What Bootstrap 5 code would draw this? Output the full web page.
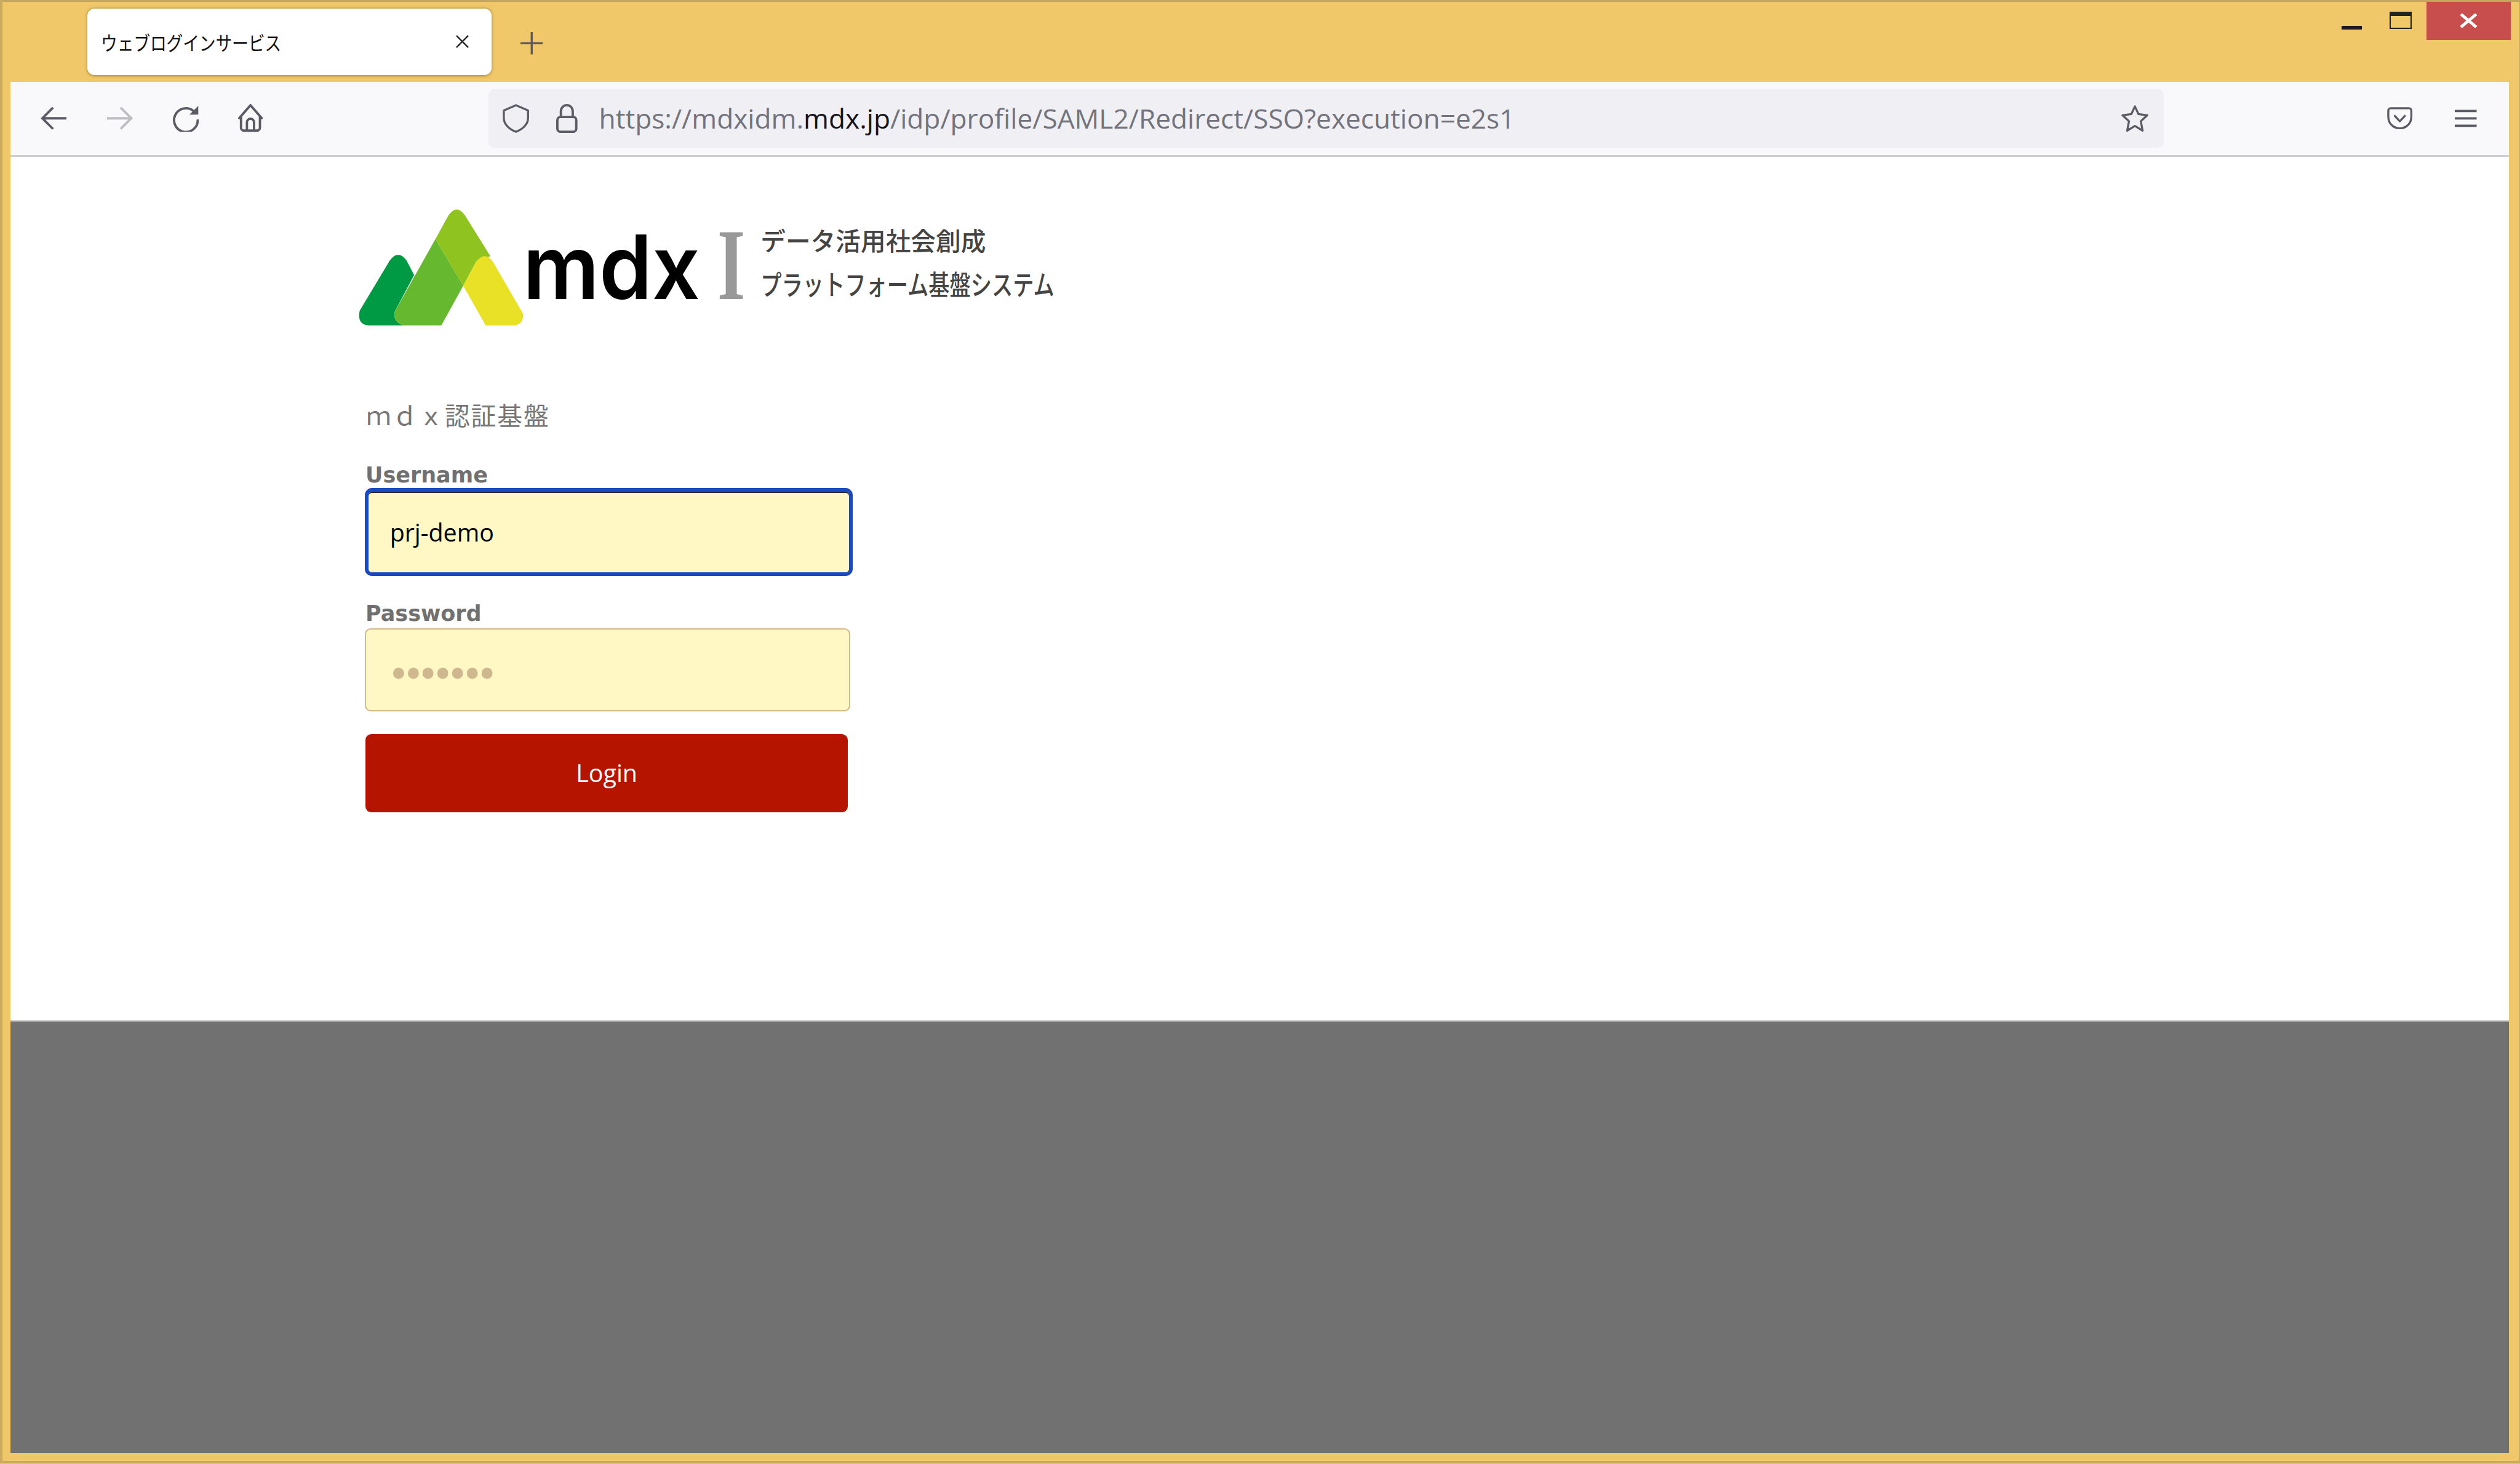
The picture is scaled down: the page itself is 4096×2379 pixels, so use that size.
<!DOCTYPE html>
<html lang="ja">
<head>
<meta charset="utf-8">
<title>ウェブログインサービス</title>
<link href="https://cdn.jsdelivr.net/npm/bootstrap@5.3.0/dist/css/bootstrap.min.css" rel="stylesheet">
<style>
html,body{overflow:hidden;background:#f0c869}
body{zoom:.961;width:4262px;height:2475px;font-family:"Open Sans","Noto Sans CJK JP",sans-serif}
.win-frame{width:4262px;height:2475px;background:#f0c869;border-top:3.2px solid #c4a75e;border-left:4.2px solid #c9aa5e;border-right:2.2px solid #d0ae5f;border-bottom:4.2px solid #c9aa5e;padding:0 16px 14px 14px}
.title-row{height:135px;margin-right:-3px}
.tab-box{width:683px;height:113px;margin:11px 0 0 130px;background:#fff;border-radius:12px;box-shadow:0 1px 6px rgba(90,70,20,.55);padding:0 36px 0 23px}
.tab-label{font:33px "Noto Sans CJK JP",sans-serif;color:#111;transform:scaleX(.845);transform-origin:left center;white-space:nowrap;letter-spacing:-.2px}
.plus-ico{margin:6px 0 0 49px;align-self:center}
.ctl-min{width:35px;height:6.3px;background:#1b1b1b;margin:41px 47px 0 0}
.ctl-max{width:37px;height:29px;border:2.2px solid #222;border-top-width:7.4px;margin:17px 25px 0 0}
.ctl-close{width:143px;height:64px;background:#c84e4e}
.tool-row{height:127px;background:#f9f9fb;border-bottom:3.2px solid #cfcfd3;padding:0 55px 0 50px}
.gap-fwd{margin-left:69px}
.gap-reload{margin-left:67px}
.gap-home{margin-left:66px}
.gap-lock{margin-left:46px}
.gap-menu{margin-left:71px}
.url-box{height:99px;margin:0 378px 0 380px;background:#f0f0f4;border-radius:10px;padding:0 25px 0 24px}
.url-text{font:46px "Open Sans",sans-serif;color:#73737d;margin-left:36px;white-space:nowrap}
.url-text b{font-weight:400;color:#15141a}
.sheet{height:1461px;background:#fff;padding:75px 0 0 599px}
.brand-logo{display:block;margin-left:-17px}
.mdx-word{font:600 150px Inter,sans-serif;fill:#000}
.bar-letter{font:700 172px "Liberation Serif",serif;fill:#999}
.tag-line{font:500 43px "Noto Sans CJK JP",sans-serif;fill:#444}
.tag-tall{font-size:47px}
.site-title{font:42.5px/52px "Noto Sans CJK JP",sans-serif;color:#777;margin:115px 0 0 2px;letter-spacing:1.9px}
.cred-label{display:block;font:700 36.4px/40px "DejaVu Sans",sans-serif;color:#707070;margin:0 0 0 1px}
.form-control.cred-input{height:140px;width:821px;background:#fff7c4;border:2.2px solid #d2b98a;border-radius:10px;padding:0 0 0 42px;font:41px "Open Sans",sans-serif;color:#000;box-shadow:none}
.form-control.cred-input.is-active{width:825px;height:149px;border:6.3px solid #1b49c2;box-shadow:inset 0 2px 0 #2a2a2a;padding:2px 0 0 36px;border-radius:12px}
.form-control.cred-input.is-hidden{color:#cfb78f;font:64px "DejaVu Sans",sans-serif;letter-spacing:-12.8px;padding:15px 0 0 36px}
.user-label{margin-top:57px;margin-bottom:1px}
.pass-label{margin-top:44px;margin-bottom:5px}
.btn.login-btn{display:block;width:816px;height:133px;margin:38px 0 0 1px;background:#b51500;border:0;border-radius:10px;color:#fff;font:41px "Open Sans",sans-serif}
.gray-band{height:732px;background:#717171;border-top:2.2px solid #c9c9c9}
</style>
</head>
<body>
<div class="win-frame d-flex flex-column">
  <div class="title-row d-flex align-items-start">
    <div class="tab-box d-flex align-items-center justify-content-between">
      <span class="tab-label">ウェブログインサービス</span>
      <svg width="26" height="26" viewBox="0 0 26 26"><path d="M3 3 23 23M23 3 3 23" stroke="#222" stroke-width="2.5" fill="none"/></svg>
    </div>
    <svg class="plus-ico" width="38" height="38" viewBox="0 0 38 38"><path d="M19 0V38M0 19H38" stroke="#5b5b66" stroke-width="3.5" fill="none"/></svg>
    <div class="ms-auto d-flex align-items-start">
      <div class="ctl-min"></div>
      <div class="ctl-max"></div>
      <div class="ctl-close d-flex align-items-center justify-content-center">
        <svg width="30" height="24" viewBox="0 0 30 24"><path d="M2 1 28 23M28 1 2 23" stroke="#fff" stroke-width="5" fill="none"/></svg>
      </div>
    </div>
  </div>
  <div class="tool-row d-flex align-items-center">
    <svg class="flex-shrink-0" width="44" height="40" viewBox="0 0 44 40"><path d="M44 20H4M21 2 3 20 21 38" stroke="#5b5b66" stroke-width="4" fill="none"/></svg>
    <svg class="flex-shrink-0 gap-fwd" width="44" height="40" viewBox="0 0 44 40"><path d="M0 20H40M23 2 41 20 23 38" stroke="#bdbdc2" stroke-width="4" fill="none"/></svg>
    <svg class="flex-shrink-0 gap-reload" width="44" height="46" viewBox="0 0 44 46"><path d="M35 11A20 20 0 1 0 42 25" stroke="#5b5b66" stroke-width="4" fill="none"/><path d="M43 2V17H28Z" fill="#5b5b66"/></svg>
    <svg class="flex-shrink-0 gap-home" width="44" height="48" viewBox="0 0 44 48"><path d="M3 24 22 2 41 24M6 21V40a5 5 0 0 0 5 5H33a5 5 0 0 0 5-5V21M16 45V31a6 6 0 0 1 12 0V45" stroke="#5b5b66" stroke-width="4" fill="none" stroke-linejoin="round" stroke-linecap="round"/></svg>
    <div class="url-box flex-grow-1 d-flex align-items-center">
      <svg class="flex-shrink-0" width="45" height="49" viewBox="0 0 45 49"><path d="M22.5 2 43 11V24C43 35 33 43 22.5 47 12 43 2 35 2 24V11Z" stroke="#5b5b66" stroke-width="3.5" fill="none" stroke-linejoin="round"/></svg>
      <svg class="flex-shrink-0 gap-lock" width="36" height="49" viewBox="0 0 36 49"><path d="M8 22V12a10 10 0 0 1 20 0V22" stroke="#5b5b66" stroke-width="4" fill="none"/><rect x="2" y="22" width="32" height="25" rx="5" stroke="#5b5b66" stroke-width="4" fill="none"/></svg>
      <div class="url-text">https://mdxidm.<b>mdx.jp</b>/idp/profile/SAML2/Redirect/SSO?execution=e2s1</div>
      <svg class="flex-shrink-0 ms-auto" width="48" height="47" viewBox="0 0 48 47"><path d="M24 3 30 16 45 18 34 28 37 44 24 36 11 44 14 28 3 18 18 16Z" stroke="#5b5b66" stroke-width="3.5" fill="none" stroke-linejoin="round"/></svg>
    </div>
    <svg class="flex-shrink-0" width="43" height="38" viewBox="0 0 43 38"><path d="M6 2H37a4 4 0 0 1 4 4V16C41 28 32 36 21.5 36 11 36 2 28 2 16V6A4 4 0 0 1 6 2ZM12 14 21.5 24 31 14" stroke="#5b5b66" stroke-width="3.5" fill="none" stroke-linejoin="round"/></svg>
    <svg class="flex-shrink-0 gap-menu" width="37" height="30" viewBox="0 0 37 30"><path d="M0 2.5H37M0 15H37M0 27.5H37" stroke="#5b5b66" stroke-width="4" fill="none"/></svg>
  </div>
  <div class="sheet">
    <svg class="brand-logo" width="1200" height="220" viewBox="600 340 1200 220">
      <path d="M736 404 758 364Q772 344 786 364L829 433 805 442 783 483Z" fill="#8fc31f"/>
      <path d="M622 550Q603 548 608 525L659 440Q673 421 687 440L700 465 667 527Q664 545 683 550Z" fill="#009a44"/>
      <path d="M736 404 783 483 746 550H683Q664 545 667 527Z" fill="#66b82f"/>
      <path d="M805 442Q820 424 833 442L884 530Q886 548 869 550H821L783 483Z" fill="#e8e125"/>
      <text class="mdx-word" x="884" y="505" textLength="300" lengthAdjust="spacingAndGlyphs">mdx</text>
      <text class="bar-letter" x="1213" y="505" textLength="47" lengthAdjust="spacingAndGlyphs">I</text>
      <text class="tag-line" x="1286" y="423" textLength="381" lengthAdjust="spacingAndGlyphs">データ活用社会創成</text>
      <text class="tag-line tag-tall" x="1286" y="499" textLength="497" lengthAdjust="spacingAndGlyphs">プラットフォーム基盤システム</text>
    </svg>
    <div class="site-title">ｍｄｘ認証基盤</div>
    <label class="cred-label user-label" for="userInput">Username</label>
    <input id="userInput" class="form-control cred-input is-active" type="text" value="prj-demo">
    <label class="cred-label pass-label" for="passInput">Password</label>
    <input id="passInput" class="form-control cred-input is-hidden" type="password" value="1234567">
    <button class="btn login-btn" type="button">Login</button>
  </div>
  <div class="gray-band"></div>
</div>
</body>
</html>
